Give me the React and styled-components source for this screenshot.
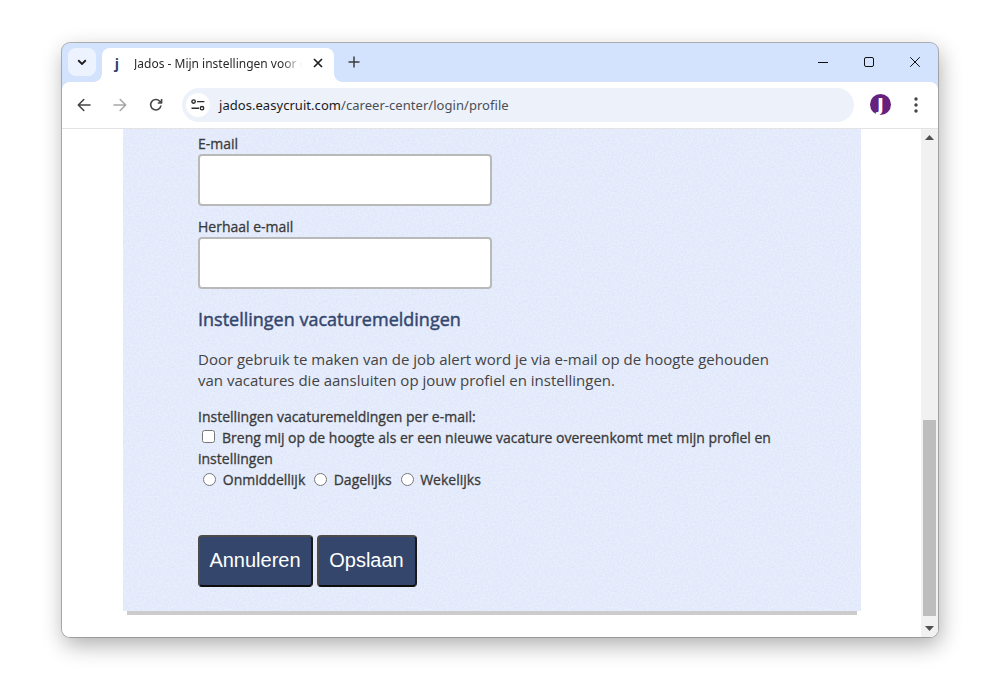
import React from "react";
import styled, { createGlobalStyle } from "styled-components";

const Global = createGlobalStyle`
  html, body { margin: 0; padding: 0; background: #fff; height: 678px; overflow: hidden; }
  * { box-sizing: border-box; }
`;

const noise = `url("data:image/svg+xml,%3Csvg xmlns='http://www.w3.org/2000/svg' width='200' height='200'%3E%3Cfilter id='n'%3E%3CfeTurbulence type='fractalNoise' baseFrequency='0.55' numOctaves='2' stitchTiles='stitch'/%3E%3CfeColorMatrix values='0 0 0 0 1 0 0 0 0 1 0 0 0 0 1 1.4 0 0 0 -0.4'/%3E%3C/filter%3E%3Crect width='200' height='200' filter='url(%23n)' opacity='.5'/%3E%3C/svg%3E")`;

const Stage = styled.div`
  width: 1000px;
  height: 678px;
  padding: 43px 62px 41px;
`;
const Win = styled.div`
  width: 876px;
  height: 594px;
  border-radius: 8px;
  overflow: hidden;
  background: #d3e3fd;
  box-shadow: 0 0 0 1px rgba(120,120,120,.55), 2px 8px 22px rgba(0,0,0,.32);
  display: flex;
  flex-direction: column;
`;
const TabBar = styled.div`
  height: 39px;
  flex: none;
  display: flex;
  align-items: flex-end;
  padding-left: 6px;
  color: #1f1f1f;
`;
const TabSearch = styled.div`
  width: 28px;
  height: 28px;
  margin: 0 6px 6px 0;
  border-radius: 8px;
  background: #edf3fe;
  display: flex;
  align-items: center;
  justify-content: center;
`;
const Tab = styled.div`
  position: relative;
  width: 232px;
  height: 34px;
  background: #fff;
  border-radius: 8px 8px 0 0;
  display: flex;
  align-items: center;
  padding: 0 9px 3px 10px;
  &::before, &::after {
    content: "";
    position: absolute;
    bottom: 0;
    width: 8px;
    height: 8px;
    background: radial-gradient(circle at var(--c), transparent 7.5px, #fff 8px);
  }
  &::before { left: -8px; --c: 0 0; }
  &::after { right: -8px; --c: 100% 0; }
`;
const Favicon = styled.span`
  width: 10px;
  margin-right: 12px;
  text-align: center;
  font: 700 14px/16px "Open Sans", sans-serif;
  color: #2f4170;
`;
const TabTitle = styled.span`
  flex: 1;
  font: 400 12px/16px "Noto Sans", sans-serif;
  white-space: nowrap;
  overflow: hidden;
  color: #2a2a2a;
  -webkit-mask-image: linear-gradient(90deg, #000 88%, transparent 100%);
  mask-image: linear-gradient(90deg, #000 88%, transparent 100%);
`;
const TabClose = styled.span`
  width: 16px;
  height: 16px;
  margin: 0 -1px 1px 8px;
  display: flex;
  align-items: center;
  justify-content: center;
`;
const NewTab = styled.div`
  width: 16px;
  height: 16px;
  margin: 0 0 12px 12px;
  display: flex;
  align-items: center;
  justify-content: center;
`;
const WinControls = styled.div`
  margin-left: auto;
  height: 100%;
  display: flex;
  align-items: center;
  padding: 0 18px 1px 0;
  gap: 36px;
`;
const Ctl = styled.span`
  width: 10px;
  height: 10px;
  display: block;
  line-height: 0;
`;
const Toolbar = styled.div`
  height: 47px;
  flex: none;
  background: #fff;
  border-radius: 8px 8px 0 0;
  border-bottom: 1px solid #e3e3e3;
  display: flex;
  align-items: center;
  padding: 0 0 1px 13px;
`;
const NavBtn = styled.span`
  width: 18px;
  height: 18px;
  margin-right: 18px;
  display: flex;
  align-items: center;
  justify-content: center;
  color: ${(p) => (p.$off ? "#a8a8a8" : "#474747")};
`;
const Omni = styled.div`
  width: 672px;
  height: 34px;
  margin-left: -1px;
  border-radius: 17px;
  background: #ecf1fa;
  display: flex;
  align-items: center;
  padding-left: 4px;
`;
const SiteIcon = styled.span`
  width: 24px;
  height: 24px;
  border-radius: 50%;
  background: #fff;
  display: flex;
  align-items: center;
  justify-content: center;
`;
const Url = styled.span`
  margin-left: 9px;
  font: 400 13px/18px "Noto Sans", sans-serif;
  letter-spacing: 0.045px;
  color: #4a4f55;
  b { font-weight: 400; color: #1b1b1b; }
`;
const Avatar = styled.span`
  width: 21px;
  height: 21px;
  margin-left: 16px;
  border-radius: 50%;
  background: #66217d;
  color: #fff;
  display: flex;
  align-items: center;
  justify-content: center;
  font: 800 18px/21px "Open Sans", sans-serif;
`;
const Dots = styled.span`
  width: 4px;
  margin-left: 23px;
  line-height: 0;
`;
const Viewport = styled.div`
  flex: 1;
  min-height: 0;
  background: #fff;
  display: flex;
`;
const Page = styled.div`
  flex: 1;
  min-width: 0;
  padding-left: 61px;
`;
const Panel = styled.div`
  width: 738px;
  height: 482px;
  padding: 6px 75px 0;
  background-color: #dfe7fa;
  background-image: ${noise};
  box-shadow: 0 8px 0 -4px #cccccc;
  font-family: "Open Sans", sans-serif;
  color: #3a3a3a;
`;
const Label = styled.label`
  display: block;
  margin-bottom: 2px;
  font-size: 14px;
  line-height: 17px;
  -webkit-text-stroke: 0.3px #3a3a3a;
`;
const Input = styled.input`
  display: block;
  width: 294px;
  height: 52px;
  margin: 0 0 12px;
  background: #fff;
  border: 2px solid #b9b9b9;
  border-radius: 4px;
`;
const Heading = styled.h2`
  margin: 18px 0 0;
  font: 500 18px/24px "Open Sans", sans-serif;
  -webkit-text-stroke: 0.45px #34466e;
  color: #34466e;
`;
const Para = styled.p`
  margin: 18px 0 0;
  width: 590px;
  font-size: 15px;
  line-height: 21px;
  color: #444;
`;
const Options = styled.div`
  margin-top: 15px;
  width: 590px;
  font-size: 14px;
  line-height: 21px;
  -webkit-text-stroke: 0.3px #3a3a3a;
`;
const Check = styled.input`
  width: 13px;
  height: 13px;
  margin: 3px 7px 3px 4px;
  vertical-align: 0;
`;
const Radio = styled.input`
  width: 13px;
  height: 13px;
  margin: 3px 6.5px 3px 5.3px;
  vertical-align: -1px;
`;
const Actions = styled.div`
  margin-top: 45px;
  display: flex;
  gap: 4px;
`;
const Btn = styled.button`
  width: ${(p) => p.$w}px;
  height: 52px;
  padding: 0 1px 2px 0;
  background: #34466c;
  border: 2px solid #4b4b4b;
  border-bottom-color: #0d0d0d;
  border-right-color: #1a1a1a;
  border-radius: 4px;
  color: #fff;
  font: 400 20px "Liberation Sans", Arial, sans-serif;
`;
const Scrollbar = styled.div`
  width: 17px;
  flex: none;
  background: #f1f1f1;
  display: flex;
  flex-direction: column;
  align-items: center;
`;
const Arrow = styled.span`
  height: 17px;
  flex: none;
  display: flex;
  align-items: center;
  justify-content: center;
`;
const Track = styled.div`
  flex: 1;
  width: 13px;
  padding-bottom: 4px;
  display: flex;
  flex-direction: column;
  justify-content: flex-end;
`;
const Thumb = styled.div`
  height: 196px;
  background: #bdbdbd;
`;

const S = { fill: "none", stroke: "currentColor", strokeWidth: 1.6, strokeLinecap: "round", strokeLinejoin: "round" };

export default function App() {
  return (
    <Stage>
      <Global />
      <Win>
        <TabBar>
          <TabSearch>
            <svg width="10" height="7" viewBox="0 0 10 7"><path d="M1.2 1.3 5 5l3.800-3.700" fill="none" stroke="#1f1f1f" strokeWidth="1.9" /></svg>
          </TabSearch>
          <Tab>
            <Favicon>j</Favicon>
            <TabTitle>Jados - Mijn instellingen voor de job alert</TabTitle>
            <TabClose>
              <svg width="10" height="10" viewBox="0 0 10 10"><path d="M1 1l8 8M9 1 1 9" stroke="#1f1f1f" strokeWidth="1.7" /></svg>
            </TabClose>
          </Tab>
          <NewTab>
            <svg width="12" height="12" viewBox="0 0 12 12"><path d="M6 .5v11M.5 6h11" stroke="#3c3c3c" strokeWidth="1.5" /></svg>
          </NewTab>
          <WinControls>
            <Ctl><svg width="10" height="10" viewBox="0 0 10 10"><path d="M0 5.500h10" stroke="#111" strokeWidth="1" /></svg></Ctl>
            <Ctl><svg width="10" height="10" viewBox="0 0 10 10"><rect x=".5" y=".5" width="9" height="9" rx="1.500" fill="none" stroke="#111" /></svg></Ctl>
            <Ctl><svg width="10" height="10" viewBox="0 0 10 10"><path d="M.2.2l9.600 9.600M9.800.2.2 9.800" stroke="#111" strokeWidth="1" /></svg></Ctl>
          </WinControls>
        </TabBar>
        <Toolbar>
          <NavBtn>
            <svg width="14" height="14" viewBox="0 0 14 14" {...S}><path d="M13 7H1.500M6.800 1.500 1.300 7l5.500 5.500" /></svg>
          </NavBtn>
          <NavBtn $off>
            <svg width="14" height="14" viewBox="0 0 14 14" {...S}><path d="M1 7h11.500M7.200 1.500 12.700 7l-5.500 5.500" /></svg>
          </NavBtn>
          <NavBtn>
            <svg width="14" height="14" viewBox="0 0 14 14" {...S} strokeLinecap="butt"><path d="M12 7.500A5.200 5.200 0 1 1 10.700 3.200L12.600 5M12.600 1v4H8.800" /></svg>
          </NavBtn>
          <Omni>
            <SiteIcon>
              <svg width="14" height="12" viewBox="0 0 14 12" fill="none" stroke="#2b2b2b" strokeWidth="1.4">
                <circle cx="2.600" cy="2.600" r="1.700" /><path d="M6 2.600h7.400M0.500 9.200H8" /><circle cx="11" cy="9.200" r="1.700" />
              </svg>
            </SiteIcon>
            <Url><b>jados.easycruit.com</b>/career-center/login/profile</Url>
          </Omni>
          <Avatar>J</Avatar>
          <Dots>
            <svg width="4" height="16" viewBox="0 0 4 16" fill="#444"><circle cx="2" cy="2" r="1.700" /><circle cx="2" cy="8" r="1.700" /><circle cx="2" cy="14" r="1.700" /></svg>
          </Dots>
        </Toolbar>
        <Viewport>
          <Page>
            <Panel>
              <Label>E-mail</Label>
              <Input type="text" />
              <Label>Herhaal e-mail</Label>
              <Input type="text" />
              <Heading>Instellingen vacaturemeldingen</Heading>
              <Para>Door gebruik te maken van de job alert word je via e-mail op de hoogte gehouden van vacatures die aansluiten op jouw profiel en instellingen.</Para>
              <Options>
                Instellingen vacaturemeldingen per e-mail:<br />
                <Check type="checkbox" />Breng mij op de hoogte als er een nieuwe vacature overeenkomt met mijn profiel en instellingen<br />
                <Radio type="radio" name="f" />Onmiddellijk{" "}
                <Radio type="radio" name="f" />Dagelijks{" "}
                <Radio type="radio" name="f" />Wekelijks
              </Options>
              <Actions>
                <Btn $w={115}>Annuleren</Btn>
                <Btn $w={100}>Opslaan</Btn>
              </Actions>
            </Panel>
          </Page>
          <Scrollbar>
            <Arrow><svg width="9" height="5" viewBox="0 0 9 5"><path d="M4.500 0 9 5H0z" fill="#505050" /></svg></Arrow>
            <Track><Thumb /></Track>
            <Arrow><svg width="9" height="5" viewBox="0 0 9 5"><path d="M0 0h9L4.500 5z" fill="#505050" /></svg></Arrow>
          </Scrollbar>
        </Viewport>
      </Win>
    </Stage>
  );
}
